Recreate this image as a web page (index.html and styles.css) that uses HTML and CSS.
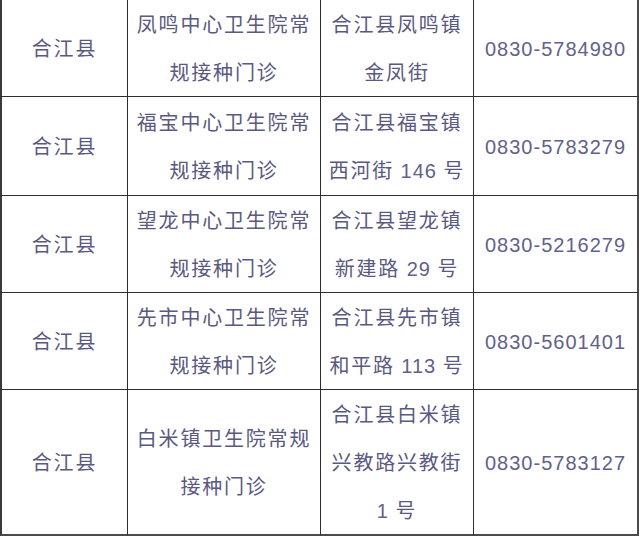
FILE: index.html
```html
<!DOCTYPE html>
<html lang="zh-CN">
<head>
<meta charset="utf-8">
<title>常规接种门诊</title>
<link rel="stylesheet" href="styles.css">
</head>
<body>
<table class="clinics">
  <tbody>
    <tr class="row r1">
      <td class="c1">合江县</td>
      <td class="c2">凤鸣中心卫生院常<br>规接种门诊</td>
      <td class="c3">合江县凤鸣镇<br>金凤街</td>
      <td class="c4"><span class="num">0830-5784980</span></td>
    </tr>
    <tr class="row r2">
      <td class="c1">合江县</td>
      <td class="c2">福宝中心卫生院常<br>规接种门诊</td>
      <td class="c3">合江县福宝镇<br>西河街<span class="num"> 146 </span>号</td>
      <td class="c4"><span class="num">0830-5783279</span></td>
    </tr>
    <tr class="row r3">
      <td class="c1">合江县</td>
      <td class="c2">望龙中心卫生院常<br>规接种门诊</td>
      <td class="c3">合江县望龙镇<br>新建路<span class="num"> 29 </span>号</td>
      <td class="c4"><span class="num">0830-5216279</span></td>
    </tr>
    <tr class="row r4">
      <td class="c1">合江县</td>
      <td class="c2">先市中心卫生院常<br>规接种门诊</td>
      <td class="c3">合江县先市镇<br>和平路<span class="num"> 113 </span>号</td>
      <td class="c4"><span class="num">0830-5601401</span></td>
    </tr>
    <tr class="row r5 last">
      <td class="c1">合江县</td>
      <td class="c2">白米镇卫生院常规<br>接种门诊</td>
      <td class="c3">合江县白米镇<br>兴教路兴教街<br><span class="num">1 </span>号</td>
      <td class="c4"><span class="num">0830-5783127</span></td>
    </tr>
  </tbody>
</table>
</body>
</html>
```
FILE: styles.css
```css
html, body {
  margin: 0;
  padding: 0;
  background: #ffffff;
}

.clinics {
  border-collapse: separate;
  border-spacing: 0;
  table-layout: fixed;
  font-family: "Noto Sans CJK SC", "Noto Sans", sans-serif;
  font-size: 20px;
  letter-spacing: 1.8px;
  color: #5a5980;
}

.clinics td {
  padding: 0;
  line-height: 48px;
  text-align: center;
  vertical-align: middle;
  border-right: 1px solid #2e2e2e;
  border-bottom: 1px solid #2e2e2e;
  white-space: nowrap;
  overflow: hidden;
}

.clinics .c1 {
  width: 125px;
  border-left: 2px solid #3a3a3a;
}

.clinics .c2 {
  width: 192px;
}

.clinics .c3 {
  width: 152px;
}

.clinics .c4 {
  width: 163px;
  border-right: 2px solid #4a4a4a;
}

.r1 td { height: 96px; }
.r2 td { height: 98px; }
.r3 td { height: 96px; }
.r4 td { height: 96px; }
.r5 td {
  height: 144px;
  border-bottom: 2px solid #4a4a4a;
}

.num {
  font-family: "Liberation Sans", "DejaVu Sans", sans-serif;
  font-size: 20px;
  line-height: 1;
  letter-spacing: 1px;
  color: #62618a;
}
```
